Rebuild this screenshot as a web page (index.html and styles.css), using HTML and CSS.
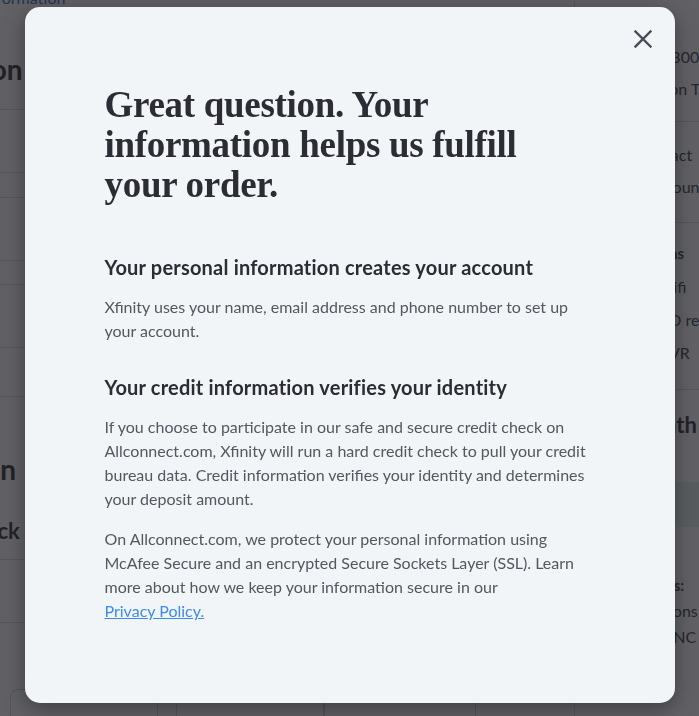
FILE: index.html
```html
<!DOCTYPE html>
<html lang="en">
<head>
<meta charset="utf-8">
<title>Great question</title>
<link rel="stylesheet" href="styles.css">
</head>
<body>
<div class="page">
  <main class="main">
    <div class="toplink">More information</div>
    <h2 class="sec-title">Installation</h2>
    <div class="row r1"></div>
    <div class="row r2"></div>
    <div class="row r3"></div>
    <div class="row r4"></div>
    <div class="row r5"></div>
    <div class="row r6"></div>
    <div class="row r7"></div>
    <h2 class="sec-title sec2">Verification</h2>
    <h3 class="sub-title">Credit check</h3>
    <div class="row r8"></div>
    <div class="row r9"></div>
    <div class="boxes">
      <div class="box b1"></div>
      <div class="box b2"></div>
      <div class="box b3"></div>
    </div>
  </main>
  <aside class="side">
    <div class="side-block b-one">
      <p class="side-line">Download 300M</p>
      <p class="side-line">Streaming on TV</p>
    </div>
    <div class="side-block b-two">
      <p class="side-line">Term contract</p>
      <p class="side-line">Promo discount</p>
    </div>
    <div class="side-block b-three">
      <p class="side-line strong">Extra options</p>
      <p class="side-line">Includes Wifi</p>
      <p class="side-line">Includes HD receiver</p>
      <p class="side-line">Includes DVR</p>
    </div>
    <div class="side-block b-four">
      <p class="side-title">Per month</p>
    </div>
    <div class="band"></div>
    <div class="side-block b-addr">
      <p class="side-line strong">Your address:</p>
      <p class="side-line">200 Commons Ct</p>
      <p class="side-line">Morrisville NC 27560</p>
    </div>
  </aside>
</div>

<div class="overlay">
  <div class="modal" role="dialog" aria-modal="true">
    <button class="close" aria-label="Close">
      <svg width="18" height="18" viewBox="0 0 18 18" aria-hidden="true">
        <path d="M1.5 1.5 L16.5 16.5 M16.5 1.5 L1.5 16.5" stroke="#4b4b57" stroke-width="2.4" stroke-linecap="square" fill="none"/>
      </svg>
    </button>
    <div class="modal-body">
      <h1 class="title">Great question. Your information helps us fulfill your order.</h1>
      <h2 class="heading first-heading">Your personal information creates your account</h2>
      <p class="text">Xfinity uses your name, email address and phone number to set up your account.</p>
      <h2 class="heading">Your credit information verifies your identity</h2>
      <p class="text">If you choose to participate in our safe and secure credit check on Allconnect.com, Xfinity will run a hard credit check to pull your credit bureau data. Credit information verifies your identity and determines your deposit amount.</p>
      <p class="text">On Allconnect.com, we protect your personal information using McAfee Secure and an encrypted Secure Sockets Layer (SSL). Learn more about how we keep your information secure in our <a class="link" href="#">Privacy Policy.</a></p>
    </div>
  </div>
</div>
</body>
</html>
```

FILE: styles.css
```css
html, body {
  margin: 0;
  padding: 0;
  height: 100%;
  overflow: hidden;
}
body {
  font-family: Lato, "Liberation Sans", sans-serif;
  background: #ffffff;
  color: #333;
}

/* ---------- background page ---------- */
.page {
  display: grid;
  grid-template-columns: 725px 1fr;
  margin-left: -150px;
  margin-top: -10px;
  height: 740px;
}
.main {
  padding-left: 34px;
  border-right: 1px solid #d8d8d8;
}
.toplink {
  color: #1f5fb8;
  font-size: 16px;
  height: 16px;
  line-height: 16px;
  padding-left: 58px;
}
.sec-title {
  margin: 49px 0 0;
  font-size: 28px;
  line-height: 28px;
  font-weight: 700;
  color: #222;
}
.row { border-bottom: 1px solid #d6d6d6; }
.r1 { height: 26px; }
.r2 { height: 62px; }
.r3 { height: 24px; }
.r4 { height: 62px; }
.r5 { height: 23px; }
.r6 { height: 62px; }
.r7 { height: 48px; }
.sec2 { margin-top: 58px; margin-left: -12px; }
.sub-title {
  margin: 36px 0 0;
  font-size: 22px;
  line-height: 24px;
  font-weight: 700;
  color: #222;
  padding-left: 13px;
}
.r8 { height: 16px; }
.r9 { height: 62px; }
.boxes {
  display: flex;
  margin-top: 66px;
  padding-left: 126px;
}
.box {
  height: 60px;
  border: 1px solid #cfcfcf;
  border-radius: 8px;
}
.b1 { width: 146px; margin-right: 18px; }
.b2 { width: 146px; }
.b3 { width: 150px; }

.side {
  padding-left: 20px;
  white-space: nowrap;
  overflow: hidden;
}
.side-line {
  margin: 0;
  font-size: 16px;
  line-height: 32px;
  color: #333;
}
.side-line.strong { font-weight: 700; font-size: 15px; }
.side-block { border-bottom: 1px solid #d6d6d6; }
.b-one { padding: 51px 0 16px; }
.b-two { padding: 17px 0 19px; }
.b-three { padding: 14px 0 20px; }
.b-three .side-line { line-height: 33px; }
.b-four { border-bottom: none; padding: 23px 0 45px; }
.side-title {
  margin: 0;
  font-size: 22px;
  font-weight: 700;
  line-height: 24px;
  color: #222;
}
.band { height: 45px; background: #e6f0ea; }
.b-addr { border-bottom: none; padding-top: 45px; }
.b-addr .side-line { line-height: 26px; }

/* ---------- overlay + modal ---------- */
.overlay {
  position: fixed;
  inset: 0;
  background: rgba(34, 35, 42, 0.72);
  display: flex;
  justify-content: center;
  align-items: flex-start;
  padding-top: 7px;
}
.modal {
  position: relative;
  width: 650px;
  height: 696px;
  box-sizing: border-box;
  background: #f2f5f7;
  border-radius: 15px;
  box-shadow: 0 6px 22px rgba(0, 0, 0, 0.35);
  padding: 78px 84px 80px 80px;
}
.close {
  position: absolute;
  top: 16px;
  right: 16px;
  width: 32px;
  height: 32px;
  padding: 0;
  border: none;
  background: transparent;
  display: flex;
  align-items: center;
  justify-content: center;
  cursor: pointer;
}
.title {
  margin: 0;
  font-family: "Liberation Serif", "DejaVu Serif", serif;
  font-weight: 700;
  font-size: 37px;
  line-height: 40px;
  color: #2c2c34;
  letter-spacing: -0.3px;
  max-width: 440px;
}
.heading {
  margin: 32px 0 16px;
  font-size: 20px;
  line-height: 24px;
  font-weight: 700;
  color: #2c2c34;
  letter-spacing: 0.2px;
}
.first-heading { margin-top: 50px; }
.text {
  margin: 0 0 16px;
  font-size: 16px;
  line-height: 24px;
  color: #56565f;
}
.link {
  color: #3b8ced;
  text-decoration: underline;
  white-space: nowrap;
}
```
